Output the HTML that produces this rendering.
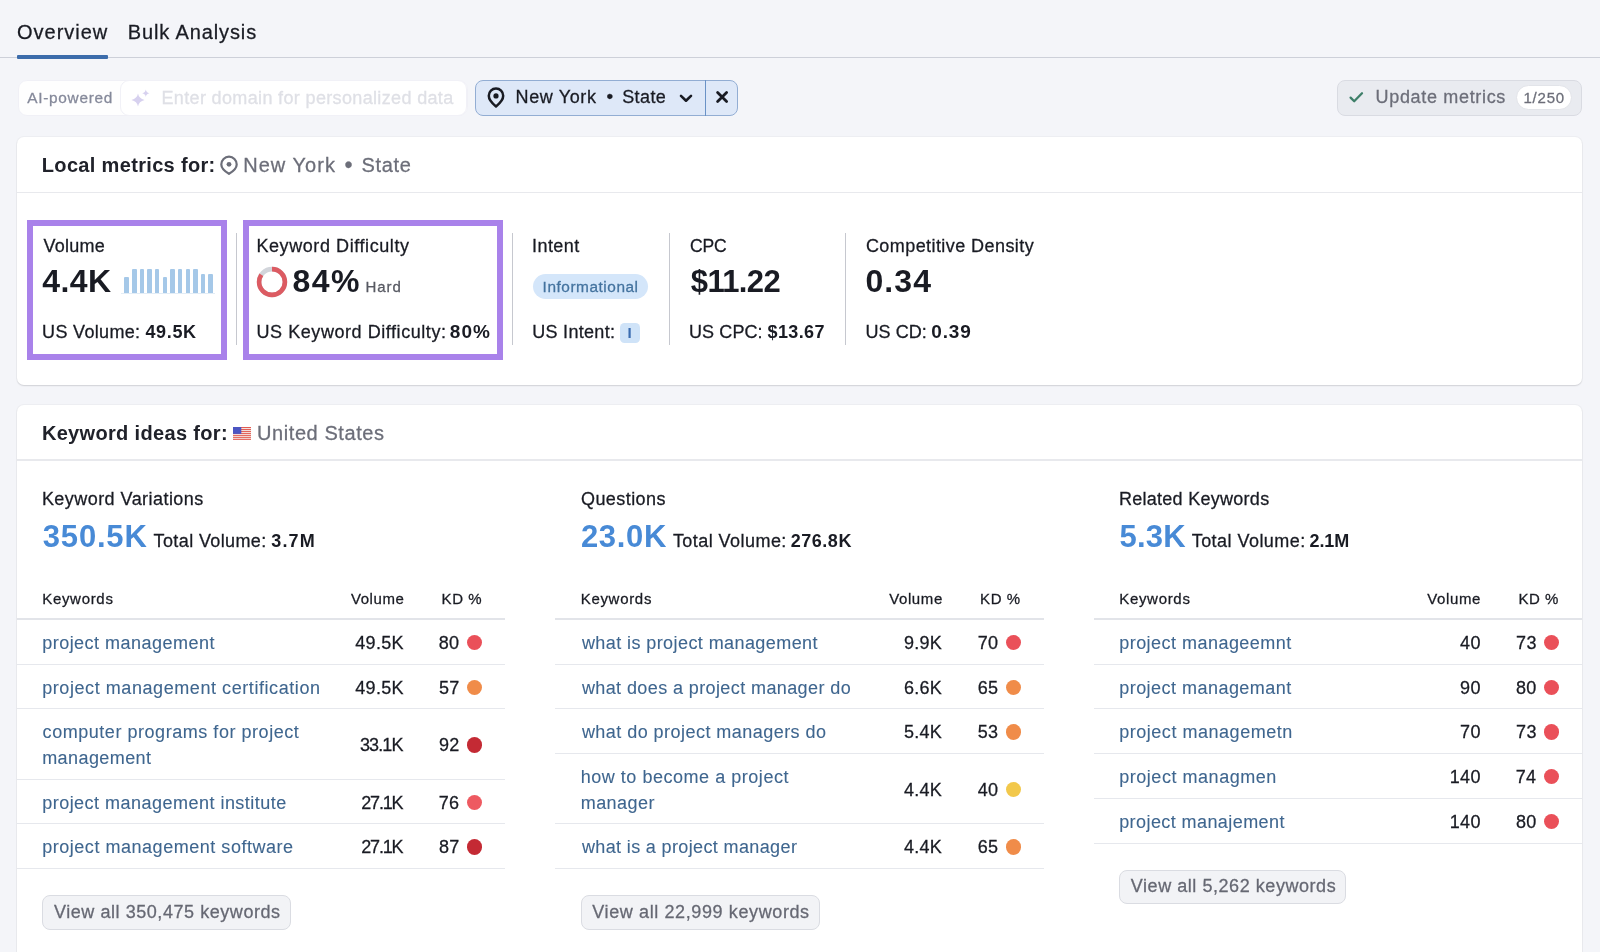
<!DOCTYPE html>
<html lang="en">
<head>
<meta charset="utf-8">
<title>Keyword Overview</title>
<style>
html,body{margin:0;padding:0}
body{width:1600px;height:952px;overflow:hidden;position:relative;background:#f4f5f9;font-family:"Liberation Sans",sans-serif;color:#191b23}
.t{position:absolute;white-space:pre;font-size:18px;line-height:20px;font-weight:400;-webkit-text-stroke:0.28px currentColor}
.abs{position:absolute}
.card{position:absolute;left:17px;width:1565px;background:#fff;border-radius:7px;box-shadow:0 0 0 1px rgba(25,27,35,.03),0 1px 1.5px rgba(25,27,35,.13)}
.hl{position:absolute;height:1px;background:#e6e8ed}
.hh{height:1.4px;background:#e8e9ed}
.vl{position:absolute;width:1px;background:#c6c8cf;top:233px;height:112px}
.dot{position:absolute;width:15.4px;height:15.4px;border-radius:50%}
.btn{position:absolute;box-sizing:border-box;background:#f2f3f6;border:1px solid #dadce2;border-radius:8px}
.hi{position:absolute;box-sizing:border-box;border:6.3px solid #a982ea}
.bar{position:absolute;width:4.7px;background:#a5c8e8;border-radius:1px 1px 0 0}
</style>
</head>
<body>
<div id="page" style="position:absolute;left:0;top:0;width:1600px;height:952px;overflow:hidden;will-change:transform">
<!-- tabs -->
<div class="abs" style="left:0;top:56.6px;width:1600px;height:1.2px;background:#cdd0d9"></div>
<div class="abs" style="left:17px;top:54.5px;width:91px;height:4px;background:#3c6cab;border-radius:1px"></div>

<!-- filter row -->
<div class="abs" style="left:17.5px;top:79.5px;width:450px;height:36.2px;box-sizing:border-box;background:#fefefe;border:1px solid #f0f0f6;border-radius:9px"></div>
<div class="abs" style="left:120px;top:79.5px;width:347px;height:36.2px;box-sizing:border-box;background:#fff;border:1px solid #f1f1f7;border-radius:9px"></div>
<svg class="abs" style="left:130.2px;top:88px" width="22" height="22" viewBox="0 0 22 22"><path d="M8 5.6 Q8.8 10.6 14.6 12 Q8.8 13.4 8 18.6 Q7.2 13.4 1.4 12 Q7.2 10.6 8 5.6 Z" fill="#d7d1ef"/><path d="M15.8 1.6 Q16.2 4.6 19.4 5.3 Q16.2 6 15.8 9 Q15.4 6 12.2 5.3 Q15.4 4.6 15.8 1.6 Z" fill="#d7d1ef"/></svg>

<div class="abs" style="left:475px;top:80px;width:263px;height:35.5px;box-sizing:border-box;background:#dee8f8;border:1.3px solid #92add3;border-radius:8px"></div>
<div class="abs" style="left:704.8px;top:80px;width:1.5px;height:35.5px;background:#6a92c6"></div>
<svg class="abs" style="left:485px;top:86px" width="22" height="24" viewBox="0 0 22 24"><path d="M11 20.4 C11 20.4 3.8 14.8 3.8 9.8 A7.2 7.2 0 0 1 18.2 9.8 C18.2 14.8 11 20.4 11 20.4 Z" fill="none" stroke="#191b23" stroke-width="2.5" stroke-linejoin="round"/><circle cx="11" cy="9.9" r="2.6" fill="#191b23"/></svg>
<span class="t" style="left:606.6px;top:86.8px;font-size:19px">•</span>
<svg class="abs" style="left:678px;top:92px" width="16" height="12" viewBox="0 0 16 12"><path d="M3 3.9 L8 8.7 L13 3.9" fill="none" stroke="#191b23" stroke-width="2.6" stroke-linecap="round" stroke-linejoin="round"/></svg>
<svg class="abs" style="left:713.6px;top:89.3px" width="16" height="16" viewBox="0 0 16 16"><path d="M3.6 3.5 L12.6 12.5 M12.6 3.5 L3.6 12.5" fill="none" stroke="#191b23" stroke-width="2.8" stroke-linecap="round"/></svg>

<div class="abs" style="left:1337px;top:80px;width:245px;height:35.5px;box-sizing:border-box;background:#e9ebf0;border:1px solid #d9dbe2;border-radius:8px"></div>
<svg class="abs" style="left:1347px;top:89px" width="18" height="16" viewBox="0 0 18 16"><path d="M3.6 8.6 L7.2 12.2 L15 4.2" fill="none" stroke="#3e7f69" stroke-width="2.3" stroke-linecap="round" stroke-linejoin="round"/></svg>
<div class="abs" style="left:1516px;top:85.3px;width:56px;height:24.4px;box-sizing:border-box;background:#fff;border:1px solid #e2e4e9;border-radius:13px"></div>

<!-- card 1 -->
<div class="card" style="top:137px;height:247.7px"></div>
<div class="hl hh" style="left:17px;top:191.8px;width:1565px"></div>
<svg class="abs" style="left:218.1px;top:154px" width="22" height="24" viewBox="0 0 22 24"><path d="M11 19.8 C11 19.8 3.3 15 3.3 10.4 A7.7 7.7 0 0 1 18.7 10.4 C18.7 15 11 19.8 11 19.8 Z" fill="none" stroke="#6c6e79" stroke-width="2.2" stroke-linejoin="round"/><circle cx="11" cy="10.3" r="2.4" fill="#6c6e79"/></svg>
<span class="t" style="left:344.4px;top:154.6px;font-size:23px;color:#6c6e79">•</span>

<div class="hi" style="left:27px;top:220px;width:200px;height:139.5px;border-width:6.2px"></div>
<div class="hi" style="left:243px;top:220px;width:260px;height:139.5px;border-width:6.6px"></div>
<div class="vl" style="left:235.5px"></div>
<div class="vl" style="left:512px"></div>
<div class="vl" style="left:669px"></div>
<div class="vl" style="left:845px"></div>

<!-- volume bars -->
<div class="abs" style="left:121px;top:293px;width:94px;height:1px;background:#e3edf6"></div>
<div class="bar" style="left:124.2px;top:277px;height:16.2px"></div>
<div class="bar" style="left:132.1px;top:268.5px;height:24.7px"></div>
<div class="bar" style="left:139.7px;top:268.5px;height:24.7px"></div>
<div class="bar" style="left:147.4px;top:268.5px;height:24.7px"></div>
<div class="bar" style="left:154.8px;top:268.5px;height:24.7px"></div>
<div class="bar" style="left:162.5px;top:277px;height:16.2px"></div>
<div class="bar" style="left:170.4px;top:268.5px;height:24.7px"></div>
<div class="bar" style="left:177.6px;top:268.5px;height:24.7px"></div>
<div class="bar" style="left:185.5px;top:268.5px;height:24.7px"></div>
<div class="bar" style="left:193.1px;top:268.5px;height:24.7px"></div>
<div class="bar" style="left:200.7px;top:273.5px;height:19.7px"></div>
<div class="bar" style="left:208.2px;top:273.5px;height:19.7px"></div>

<!-- KD donut -->
<svg class="abs" style="left:256.2px;top:265.5px" width="32" height="32" viewBox="0 0 32 32"><circle cx="16" cy="16" r="12.9" fill="none" stroke="#d2d5db" stroke-width="4.6"/><circle cx="16" cy="16" r="12.9" fill="none" stroke="#dc5b62" stroke-width="4.6" stroke-dasharray="68.1 81.05" transform="rotate(-90 16 16)"/></svg>

<!-- intent -->
<div class="abs" style="left:533px;top:274px;width:114.5px;height:24.6px;background:#d4e6fa;border-radius:13px"></div>
<div class="abs" style="left:619.5px;top:322.5px;width:20px;height:20px;background:#cfe3f8;border-radius:4.5px"></div>

<!-- card 2 -->
<div class="card" style="top:405px;height:560px"></div>
<div class="hl hh" style="left:17px;top:459.3px;width:1565px"></div>
<svg class="abs" style="left:233px;top:426.9px" width="18" height="13.2" viewBox="0 0 18 13.2"><rect width="18" height="13.2" fill="#f6ebe8"/><g fill="#e25b51"><rect y="0" width="18" height="1.05"/><rect y="2.03" width="18" height="1.05"/><rect y="4.06" width="18" height="1.05"/><rect y="6.09" width="18" height="1.05"/><rect y="8.12" width="18" height="1.05"/><rect y="10.15" width="18" height="1.05"/><rect y="12.15" width="18" height="1.05"/></g><rect width="8.3" height="6.9" fill="#4c55c2"/></svg>

<div class="hl" style="left:17.0px;top:618.4px;width:487.6px;background:#e2e4e9;height:1.5px"></div>
<div class="dot" style="left:467.1px;top:634.7px;background:#ea5059"></div>
<div class="hl" style="left:17.0px;top:663.5px;width:487.6px"></div>
<div class="dot" style="left:467.1px;top:679.5px;background:#f08c49"></div>
<div class="hl" style="left:17.0px;top:708.3px;width:487.6px"></div>
<div class="dot" style="left:467.1px;top:737.3px;background:#c42a34"></div>
<div class="hl" style="left:17.0px;top:778.6px;width:487.6px"></div>
<div class="dot" style="left:467.1px;top:794.6px;background:#ee5a61"></div>
<div class="hl" style="left:17.0px;top:823.4px;width:487.6px"></div>
<div class="dot" style="left:467.1px;top:839.4px;background:#c42a34"></div>
<div class="hl" style="left:17.0px;top:868.2px;width:487.6px"></div>
<div class="btn" style="left:42.2px;top:895.0px;width:248.7px;height:34.9px"></div>
<div class="hl" style="left:555.2px;top:618.4px;width:488.4px;background:#e2e4e9;height:1.5px"></div>
<div class="dot" style="left:1005.6px;top:634.7px;background:#ea5059"></div>
<div class="hl" style="left:555.2px;top:663.5px;width:488.4px"></div>
<div class="dot" style="left:1005.6px;top:679.5px;background:#f08c49"></div>
<div class="hl" style="left:555.2px;top:708.3px;width:488.4px"></div>
<div class="dot" style="left:1005.6px;top:724.3px;background:#f08c49"></div>
<div class="hl" style="left:555.2px;top:753.1px;width:488.4px"></div>
<div class="dot" style="left:1005.6px;top:782.1px;background:#f2c84b"></div>
<div class="hl" style="left:555.2px;top:823.4px;width:488.4px"></div>
<div class="dot" style="left:1005.6px;top:839.4px;background:#f08c49"></div>
<div class="hl" style="left:555.2px;top:868.2px;width:488.4px"></div>
<div class="btn" style="left:580.6px;top:895.0px;width:239.0px;height:34.9px"></div>
<div class="hl" style="left:1093.6px;top:618.4px;width:488.4px;background:#e2e4e9;height:1.5px"></div>
<div class="dot" style="left:1544.0px;top:634.7px;background:#ea5059"></div>
<div class="hl" style="left:1093.6px;top:663.5px;width:488.4px"></div>
<div class="dot" style="left:1544.0px;top:679.5px;background:#ea5059"></div>
<div class="hl" style="left:1093.6px;top:708.3px;width:488.4px"></div>
<div class="dot" style="left:1544.0px;top:724.3px;background:#ea5059"></div>
<div class="hl" style="left:1093.6px;top:753.1px;width:488.4px"></div>
<div class="dot" style="left:1544.0px;top:769.1px;background:#ea5059"></div>
<div class="hl" style="left:1093.6px;top:797.9px;width:488.4px"></div>
<div class="dot" style="left:1544.0px;top:813.9px;background:#ea5059"></div>
<div class="hl" style="left:1093.6px;top:842.7px;width:488.4px"></div>
<div class="btn" style="left:1119.0px;top:869.5px;width:227.2px;height:34.9px"></div>
<span class="t" style="top:22px;left:17.0px;letter-spacing:0.99px;font-size:20px;">Overview</span>
<span class="t" style="top:22px;left:127.8px;letter-spacing:0.88px;font-size:20px;">Bulk Analysis</span>
<span class="t" style="top:88px;left:27.3px;letter-spacing:0.70px;font-size:15.4px;color:#85899a;">AI-powered</span>
<span class="t" style="top:88px;left:161.5px;letter-spacing:0.35px;color:#dfe0e6;">Enter domain for personalized data</span>
<span class="t" style="top:87px;left:515.5px;letter-spacing:0.63px;">New York</span>
<span class="t" style="top:87px;left:622.2px;letter-spacing:0.40px;">State</span>
<span class="t" style="top:87px;left:1375.6px;letter-spacing:0.67px;color:#6c6e79;">Update metrics</span>
<span class="t" style="top:88px;left:1523.5px;letter-spacing:0.77px;font-size:15px;color:#6c6e79;">1/250</span>
<span class="t" style="top:155px;left:41.8px;letter-spacing:0.33px;font-size:20px;font-weight:700;-webkit-text-stroke:0;color:#20222a;">Local metrics for:</span>
<span class="t" style="top:155px;left:243.2px;letter-spacing:1.04px;font-size:20px;color:#6c6e79;">New York</span>
<span class="t" style="top:155px;left:361.6px;letter-spacing:0.65px;font-size:20px;color:#6c6e79;">State</span>
<span class="t" style="top:236px;left:43.4px;letter-spacing:0.27px;">Volume</span>
<span class="t" style="top:271px;left:42.3px;letter-spacing:0.43px;font-size:32px;font-weight:700;-webkit-text-stroke:0;">4.4K</span>
<span class="t" style="top:322px;left:42.1px;letter-spacing:0.33px;">US Volume:</span>
<span class="t" style="top:322px;left:145.4px;letter-spacing:0.67px;font-weight:700;-webkit-text-stroke:0;">49.5K</span>
<span class="t" style="top:236px;left:256.4px;letter-spacing:0.58px;">Keyword Difficulty</span>
<span class="t" style="top:271px;left:292.5px;letter-spacing:1.41px;font-size:32px;font-weight:700;-webkit-text-stroke:0;">84%</span>
<span class="t" style="top:277px;left:365.4px;letter-spacing:0.96px;font-size:15px;color:#585a63;">Hard</span>
<span class="t" style="top:322px;left:256.5px;letter-spacing:0.56px;">US Keyword Difficulty:</span>
<span class="t" style="top:322px;left:449.8px;letter-spacing:1.04px;font-size:19px;font-weight:700;-webkit-text-stroke:0;">80%</span>
<span class="t" style="top:236px;left:531.9px;letter-spacing:0.49px;">Intent</span>
<span class="t" style="top:277px;left:542.6px;letter-spacing:0.54px;font-size:15.4px;color:#44739f;">Informational</span>
<span class="t" style="top:322px;left:532.2px;letter-spacing:0.30px;">US Intent:</span>
<span class="t" style="top:323px;left:627.4px;font-size:15px;font-weight:700;-webkit-text-stroke:0;color:#3b6db0;">I</span>
<span class="t" style="top:236px;left:689.9px;letter-spacing:-0.05px;font-size:17.5px;">CPC</span>
<span class="t" style="top:272px;left:690.8px;letter-spacing:-0.65px;font-size:31px;font-weight:700;-webkit-text-stroke:0;">$11.22</span>
<span class="t" style="top:322px;left:689.0px;letter-spacing:0.10px;">US CPC:</span>
<span class="t" style="top:322px;left:767.6px;letter-spacing:0.37px;font-weight:700;-webkit-text-stroke:0;">$13.67</span>
<span class="t" style="top:236px;left:865.9px;letter-spacing:0.43px;">Competitive Density</span>
<span class="t" style="top:271px;left:865.5px;letter-spacing:1.05px;font-size:32px;font-weight:700;-webkit-text-stroke:0;">0.34</span>
<span class="t" style="top:322px;left:865.4px;letter-spacing:0.08px;">US CD:</span>
<span class="t" style="top:322px;left:931.2px;letter-spacing:0.92px;font-size:19px;font-weight:700;-webkit-text-stroke:0;">0.39</span>
<span class="t" style="top:423px;left:41.9px;letter-spacing:0.33px;font-size:20px;font-weight:700;-webkit-text-stroke:0;color:#20222a;">Keyword ideas for:</span>
<span class="t" style="top:423px;left:257.0px;letter-spacing:0.58px;font-size:20px;color:#6c6e79;">United States</span>
<span class="t" style="top:489px;left:41.9px;letter-spacing:0.45px;">Keyword Variations</span>
<span class="t" style="top:527px;left:42.8px;letter-spacing:0.81px;font-size:31px;font-weight:700;-webkit-text-stroke:0;color:#488ad6;">350.5K</span>
<span class="t" style="top:531px;left:153.6px;letter-spacing:0.38px;">Total Volume:</span>
<span class="t" style="top:531px;left:271.3px;letter-spacing:1.13px;font-weight:700;-webkit-text-stroke:0;">3.7M</span>
<span class="t" style="top:589px;left:42.2px;letter-spacing:0.69px;font-size:15px;">Keywords</span>
<span class="t" style="top:589px;left:350.9px;letter-spacing:0.60px;font-size:15px;">Volume</span>
<span class="t" style="top:589px;left:441.6px;letter-spacing:0.54px;font-size:15px;">KD %</span>
<span class="t" style="top:633px;left:42.2px;letter-spacing:0.48px;color:#3f668f;-webkit-text-stroke:0.1px currentColor;">project management</span>
<span class="t" style="top:633px;left:355.3px;letter-spacing:0.30px;">49.5K</span>
<span class="t" style="top:633px;left:438.7px;letter-spacing:0.30px;">80</span>
<span class="t" style="top:678px;left:42.2px;letter-spacing:0.57px;color:#3f668f;-webkit-text-stroke:0.1px currentColor;">project management certification</span>
<span class="t" style="top:678px;left:355.3px;letter-spacing:0.30px;">49.5K</span>
<span class="t" style="top:678px;left:438.9px;letter-spacing:0.30px;">57</span>
<span class="t" style="top:722px;left:42.6px;letter-spacing:0.54px;color:#3f668f;-webkit-text-stroke:0.1px currentColor;">computer programs for project</span>
<span class="t" style="top:748px;left:42.2px;letter-spacing:0.42px;color:#3f668f;-webkit-text-stroke:0.1px currentColor;">management</span>
<span class="t" style="top:735px;left:360.0px;letter-spacing:-0.89px;">33.1K</span>
<span class="t" style="top:735px;left:438.9px;letter-spacing:0.30px;">92</span>
<span class="t" style="top:793px;left:42.2px;letter-spacing:0.48px;color:#3f668f;-webkit-text-stroke:0.1px currentColor;">project management institute</span>
<span class="t" style="top:793px;left:361.3px;letter-spacing:-1.20px;">27.1K</span>
<span class="t" style="top:793px;left:438.8px;letter-spacing:0.30px;">76</span>
<span class="t" style="top:837px;left:42.2px;letter-spacing:0.53px;color:#3f668f;-webkit-text-stroke:0.1px currentColor;">project management software</span>
<span class="t" style="top:837px;left:361.3px;letter-spacing:-1.20px;">27.1K</span>
<span class="t" style="top:837px;left:438.9px;letter-spacing:0.30px;">87</span>
<span class="t" style="top:902px;left:53.9px;letter-spacing:0.56px;color:#666873;">View all 350,475 keywords</span>
<span class="t" style="top:489px;left:581.0px;letter-spacing:0.43px;">Questions</span>
<span class="t" style="top:527px;left:580.9px;letter-spacing:0.71px;font-size:31px;font-weight:700;-webkit-text-stroke:0;color:#488ad6;">23.0K</span>
<span class="t" style="top:531px;left:672.9px;letter-spacing:0.45px;">Total Volume:</span>
<span class="t" style="top:531px;left:790.8px;letter-spacing:0.51px;font-weight:700;-webkit-text-stroke:0;">276.8K</span>
<span class="t" style="top:589px;left:580.7px;letter-spacing:0.69px;font-size:15px;">Keywords</span>
<span class="t" style="top:589px;left:889.2px;letter-spacing:0.60px;font-size:15px;">Volume</span>
<span class="t" style="top:589px;left:980.1px;letter-spacing:0.54px;font-size:15px;">KD %</span>
<span class="t" style="top:633px;left:581.9px;letter-spacing:0.42px;color:#3f668f;-webkit-text-stroke:0.1px currentColor;">what is project management</span>
<span class="t" style="top:633px;left:903.9px;letter-spacing:0.30px;">9.9K</span>
<span class="t" style="top:633px;left:977.7px;letter-spacing:0.30px;">70</span>
<span class="t" style="top:678px;left:581.9px;letter-spacing:0.40px;color:#3f668f;-webkit-text-stroke:0.1px currentColor;">what does a project manager do</span>
<span class="t" style="top:678px;left:903.9px;letter-spacing:0.30px;">6.6K</span>
<span class="t" style="top:678px;left:977.7px;letter-spacing:0.30px;">65</span>
<span class="t" style="top:722px;left:581.9px;letter-spacing:0.46px;color:#3f668f;-webkit-text-stroke:0.1px currentColor;">what do project managers do</span>
<span class="t" style="top:722px;left:903.9px;letter-spacing:0.30px;">5.4K</span>
<span class="t" style="top:722px;left:977.8px;letter-spacing:0.30px;">53</span>
<span class="t" style="top:767px;left:580.7px;letter-spacing:0.53px;color:#3f668f;-webkit-text-stroke:0.1px currentColor;">how to become a project</span>
<span class="t" style="top:793px;left:580.7px;letter-spacing:0.46px;color:#3f668f;-webkit-text-stroke:0.1px currentColor;">manager</span>
<span class="t" style="top:780px;left:903.9px;letter-spacing:0.30px;">4.4K</span>
<span class="t" style="top:780px;left:977.7px;letter-spacing:0.30px;">40</span>
<span class="t" style="top:837px;left:581.9px;letter-spacing:0.37px;color:#3f668f;-webkit-text-stroke:0.1px currentColor;">what is a project manager</span>
<span class="t" style="top:837px;left:903.9px;letter-spacing:0.30px;">4.4K</span>
<span class="t" style="top:837px;left:977.7px;letter-spacing:0.30px;">65</span>
<span class="t" style="top:902px;left:592.3px;letter-spacing:0.61px;color:#666873;">View all 22,999 keywords</span>
<span class="t" style="top:489px;left:1118.9px;letter-spacing:0.28px;">Related Keywords</span>
<span class="t" style="top:527px;left:1119.5px;letter-spacing:0.19px;font-size:31px;font-weight:700;-webkit-text-stroke:0;color:#488ad6;">5.3K</span>
<span class="t" style="top:531px;left:1191.7px;letter-spacing:0.46px;">Total Volume:</span>
<span class="t" style="top:531px;left:1309.5px;letter-spacing:-0.07px;font-weight:700;-webkit-text-stroke:0;">2.1M</span>
<span class="t" style="top:589px;left:1119.2px;letter-spacing:0.69px;font-size:15px;">Keywords</span>
<span class="t" style="top:589px;left:1427.3px;letter-spacing:0.60px;font-size:15px;">Volume</span>
<span class="t" style="top:589px;left:1518.5px;letter-spacing:0.54px;font-size:15px;">KD %</span>
<span class="t" style="top:633px;left:1119.2px;letter-spacing:0.47px;color:#3f668f;-webkit-text-stroke:0.1px currentColor;">project manageemnt</span>
<span class="t" style="top:633px;left:1460.1px;letter-spacing:0.30px;">40</span>
<span class="t" style="top:633px;left:1516.1px;letter-spacing:0.30px;">73</span>
<span class="t" style="top:678px;left:1119.2px;letter-spacing:0.47px;color:#3f668f;-webkit-text-stroke:0.1px currentColor;">project managemant</span>
<span class="t" style="top:678px;left:1460.1px;letter-spacing:0.30px;">90</span>
<span class="t" style="top:678px;left:1516.0px;letter-spacing:0.30px;">80</span>
<span class="t" style="top:722px;left:1119.2px;letter-spacing:0.53px;color:#3f668f;-webkit-text-stroke:0.1px currentColor;">project managemetn</span>
<span class="t" style="top:722px;left:1460.1px;letter-spacing:0.30px;">70</span>
<span class="t" style="top:722px;left:1516.1px;letter-spacing:0.30px;">73</span>
<span class="t" style="top:767px;left:1119.2px;letter-spacing:0.54px;color:#3f668f;-webkit-text-stroke:0.1px currentColor;">project managmen</span>
<span class="t" style="top:767px;left:1449.8px;letter-spacing:0.30px;">140</span>
<span class="t" style="top:767px;left:1515.8px;letter-spacing:0.30px;">74</span>
<span class="t" style="top:812px;left:1119.2px;letter-spacing:0.42px;color:#3f668f;-webkit-text-stroke:0.1px currentColor;">project manajement</span>
<span class="t" style="top:812px;left:1449.8px;letter-spacing:0.30px;">140</span>
<span class="t" style="top:812px;left:1516.0px;letter-spacing:0.30px;">80</span>
<span class="t" style="top:876px;left:1130.8px;letter-spacing:0.55px;color:#666873;">View all 5,262 keywords</span>
</div>
</body>
</html>
